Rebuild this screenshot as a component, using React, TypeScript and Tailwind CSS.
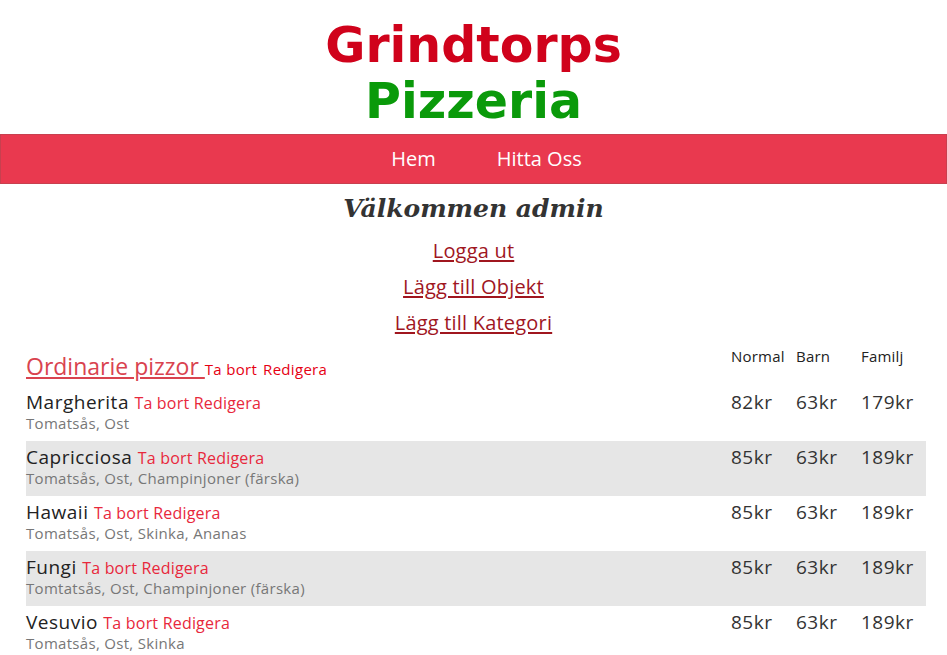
const pizzas = [
  { name: "Margherita", desc: "Tomatsås, Ost", prices: ["82kr", "63kr", "179kr"] },
  { name: "Capricciosa", desc: "Tomatsås, Ost, Champinjoner (färska)", prices: ["85kr", "63kr", "189kr"] },
  { name: "Hawaii", desc: "Tomatsås, Ost, Skinka, Ananas", prices: ["85kr", "63kr", "189kr"] },
  { name: "Fungi", desc: "Tomtatsås, Ost, Champinjoner (färska)", prices: ["85kr", "63kr", "189kr"] },
  { name: "Vesuvio", desc: "Tomatsås, Ost, Skinka", prices: ["85kr", "63kr", "189kr"] },
];

const App = () => {
  return (
    <div className="min-h-[655px] bg-white font-['Open_Sans',sans-serif]">
      {/* Logo */}
      <h1 className="pt-[18px] pb-1 text-center font-['DejaVu_Sans',sans-serif] text-[49px] font-bold leading-[56px]">
        <span className="block text-[#d0021b]">Grindtorps</span>
        <span className="block text-[#0a9a0a]">Pizzeria</span>
      </h1>

      {/* Nav */}
      <nav className="flex h-[50px] items-center justify-center gap-[61px] border border-[#c8404f] bg-[#e9394f] pl-[26px] text-[20px] text-white">
        <a>Hem</a>
        <a>Hitta Oss</a>
      </nav>

      {/* Admin */}
      <h2 className="mt-[3px] text-center font-['DejaVu_Serif',serif] text-[25px] font-bold italic leading-[43px] text-[#333]">
        Välkommen admin
      </h2>
      <div className="mt-[8px] flex flex-col items-center gap-[10px] text-[20px] tracking-[0.2px] text-[#a0161f]">
        <a className="underline underline-offset-2 leading-[26px]">Logga ut</a>
        <a className="underline underline-offset-2 leading-[26px]">Lägg till Objekt</a>
        <a className="underline underline-offset-2 leading-[26px]">Lägg till Kategori</a>
      </div>

      {/* Menu */}
      <div className="ml-[26px] mt-[9px] w-[900px]">
        <div className="flex">
          <div className="flex-1 pt-[4px]">
            <span className="text-[23px] text-[#d9434f] underline underline-offset-2">Ordinarie pizzor </span>
            <span className="text-[15px] font-medium tracking-[0.3px] text-[#e60012]">Ta bort</span>
            <span className="ml-[6px] text-[15px] font-medium tracking-[0.3px] text-[#e60012]">Redigera</span>
          </div>
          <div className="w-[65px] text-[15px] tracking-[0.2px] text-[#222]">Normal</div>
          <div className="w-[65px] text-[15px] tracking-[0.2px] text-[#222]">Barn</div>
          <div className="w-[65px] text-[15px] tracking-[0.2px] text-[#222]">Familj</div>
        </div>

        <div className="mt-[2px]">
          {pizzas.map((p, i) => (
            <div key={p.name} className={`flex h-[55px] ${i % 2 === 1 ? "bg-[#e6e6e6]" : ""}`}>
              <div className="flex-1 pt-[5px]">
                <div className="text-[19px] leading-[22px] tracking-[0.5px] text-[#222]">
                  {p.name}{" "}
                  <span className="text-[16px] tracking-[0.2px] text-[#e8283c]">Ta bort Redigera</span>
                </div>
                <div className="text-[15px] leading-[19px] tracking-[0.3px] text-[#777]">{p.desc}</div>
              </div>
              {p.prices.map((pr, j) => (
                <div key={j} className="w-[65px] pt-[5px] text-[19px] leading-[22px] tracking-[0.5px] text-[#333]">
                  {pr}
                </div>
              ))}
            </div>
          ))}
        </div>
      </div>
    </div>
  );
};

export default App;
